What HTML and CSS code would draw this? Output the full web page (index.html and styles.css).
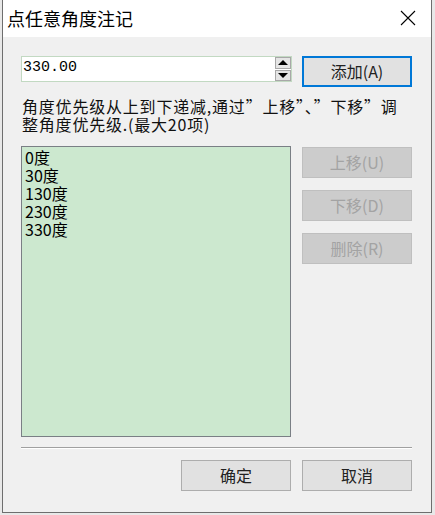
FILE: index.html
```html
<!DOCTYPE html>
<html lang="zh-CN">
<head>
    <meta charset="UTF-8">
    <title>点任意角度注记</title>
    <link rel="stylesheet" href="styles.css">
</head>
<body>
    <div class="window">
        <div class="titlebar">
            <span class="title">点任意角度注记</span>
            <svg class="close" width="16" height="16" viewBox="0 0 16 16">
                <path d="M1 1 L15 15 M15 1 L1 15" stroke="#000" stroke-width="1.1" fill="none"/>
            </svg>
        </div>
        <div class="content">
            <div class="row row--top">
                <div class="spin">
                    <input class="spin__input" type="text" value="330.00">
                    <div class="spin__btns">
                        <div class="spin__btn"><span class="tri tri--up"></span></div>
                        <div class="spin__btn"><span class="tri tri--down"></span></div>
                    </div>
                </div>
                <button class="btn btn--default">添加(A)</button>
            </div>
            <p class="hint">角度优先级从上到下递减,通过”上移”、”下移”调整角度优先级.(最大20项)</p>
            <div class="row row--list">
                <ul class="list">
                    <li>0度</li>
                    <li>30度</li>
                    <li>130度</li>
                    <li>230度</li>
                    <li>330度</li>
                </ul>
                <div class="side">
                    <button class="btn btn--disabled">上移(U)</button>
                    <button class="btn btn--disabled">下移(D)</button>
                    <button class="btn btn--disabled">删除(R)</button>
                </div>
            </div>
            <div class="sep"></div>
            <div class="row row--foot">
                <button class="btn">确定</button>
                <button class="btn">取消</button>
            </div>
        </div>
    </div>
</body>
</html>
```

FILE: styles.css
```css
html, body {
    margin: 0;
    padding: 0;
    background: #e8e8e8;
}
body {
    font-family: "Noto Sans CJK SC", sans-serif;
    font-size: 16px;
    color: #000;
}
.window {
    margin-left: 2px;
    width: 428px;
    height: 512px;
    border: 1px solid #6e6e6e;
    border-top: none;
    background: #f0f0f0;
}
.titlebar {
    height: 37px;
    background: #fff;
    display: flex;
    align-items: center;
    justify-content: space-between;
    padding: 0 15px 0 4px;
}
.title {
    font-size: 18px;
    line-height: 20px;
    margin-top: -1px;
}
.close {
    margin-top: -2px;
}
.content {
    padding: 19px 19px 0 18px;
}
.row {
    display: flex;
}
.row--top {
    gap: 10px;
    height: 31px;
}
.spin {
    width: 271px;
    height: 26px;
    display: flex;
}
.spin__input {
    flex: 1;
    min-width: 0;
    height: 26px;
    box-sizing: border-box;
    border: 1px solid #c2d9c2;
    border-right: none;
    background: #fff;
    font-family: "Liberation Mono", monospace;
    font-size: 15px;
    padding: 0 0 3px 1px;
    margin: 0;
    outline: none;
}
.spin__btns {
    width: 17px;
    display: flex;
    flex-direction: column;
    gap: 1px;
    background: #fff;
    border: 1px solid #c2d9c2;
    border-left: none;
    box-sizing: border-box;
}
.spin__btn {
    flex: 1;
    background: #e5e5e5;
    border: 1px solid #a8a8a8;
    display: flex;
    align-items: center;
    justify-content: center;
}
.tri {
    width: 0;
    height: 0;
    border-left: 5px solid transparent;
    border-right: 5px solid transparent;
}
.tri--up {
    border-bottom: 5px solid #000;
}
.tri--down {
    border-top: 5px solid #000;
}
.btn {
    width: 110px;
    height: 31px;
    box-sizing: border-box;
    border: 1px solid #adadad;
    background: #e1e1e1;
    font-family: "Noto Sans CJK SC", sans-serif;
    font-size: 16px;
    color: #222;
    padding: 0 0 2px;
    margin: 0;
}
.btn--default {
    border: 2px solid #0078d7;
}
.btn--disabled {
    background: #cccccc;
    border-color: #bfbfbf;
    color: #a3a3a3;
}
.hint {
    margin: 10px 0 0 1px;
    line-height: 18px;
    letter-spacing: 0.8px;
    color: #111;
    width: 392px;
}
.row--list {
    margin-top: 13px;
    gap: 11px;
}
.list {
    width: 270px;
    height: 291px;
    box-sizing: border-box;
    margin: 0;
    padding: 1px 3px;
    list-style: none;
    background: #cce8cf;
    border: 1px solid #7a7f85;
}
.list li {
    line-height: 18px;
}
.side {
    display: flex;
    flex-direction: column;
    gap: 12px;
    padding-top: 1px;
}
.sep {
    margin-top: 10px;
    height: 1px;
    background: #a0a0a0;
    border-bottom: 1px solid #fff;
}
.row--foot {
    margin-top: 11px;
    justify-content: flex-end;
    gap: 11px;
}
```
